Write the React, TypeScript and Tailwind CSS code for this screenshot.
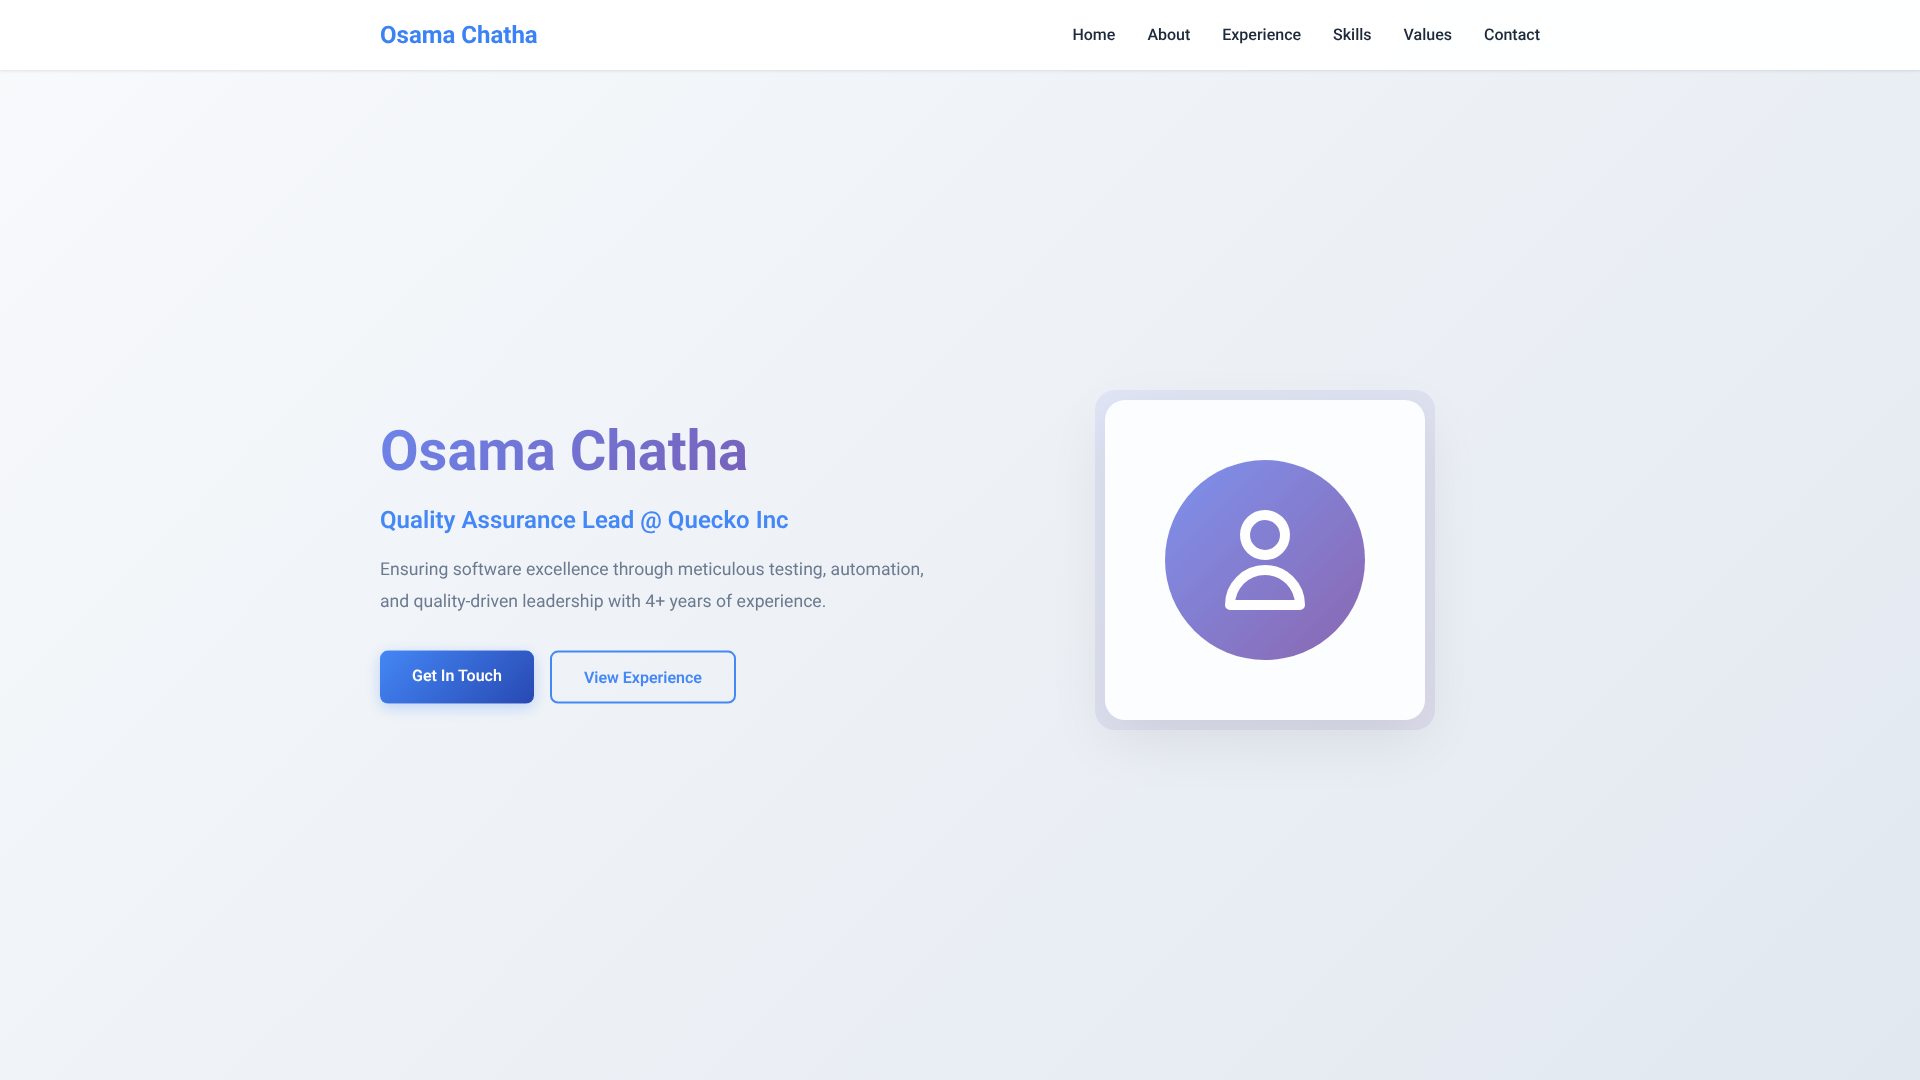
const navLinks = ['Home', 'About', 'Experience', 'Skills', 'Values', 'Contact']

function PersonIcon() {
  return (
    <svg width="100" height="110" viewBox="0 0 100 110" fill="none" stroke="#fff" strokeWidth="10" strokeLinejoin="round">
      <circle cx="50" cy="30" r="20" />
      <path d="M15 100a35 35 0 0 1 70 0z" />
    </svg>
  )
}

export default function App() {
  return (
    <div className="flex h-screen flex-col overflow-hidden bg-[linear-gradient(135deg,#f8fafc_0%,#e2e8f0_100%)] font-['Roboto',sans-serif] [text-rendering:geometricPrecision]">
      {/* Nav */}
      <header className="z-10 h-[70px] shrink-0 bg-white/95 shadow-[0_1px_3px_rgba(0,0,0,0.1)] backdrop-blur-sm">
        <nav className="mx-auto flex h-full max-w-[1200px] items-center justify-between px-5">
          <a className="text-2xl font-bold text-[#3b82f6]">Osama Chatha</a>
          <ul className="flex gap-8">
            {navLinks.map((link) => (
              <li key={link} className="text-base font-medium text-[#1e293b]">
                {link}
              </li>
            ))}
          </ul>
        </nav>
      </header>

      {/* Hero */}
      <main className="flex flex-1 items-center pb-[30px]">
        <div className="mx-auto grid w-full max-w-[1200px] grid-cols-2 items-center gap-[60px] px-5">
          <div className="translate-y-[0.6px] opacity-95 blur-[0.4px]">
            <h1 className="mb-4 bg-[linear-gradient(135deg,#667eea_0%,#764ba2_100%)] bg-clip-text text-[56px] leading-[1.2] font-bold text-transparent">
              Osama Chatha
            </h1>
            <h2 className="mb-4 text-2xl leading-[1.6] font-semibold tracking-[0.035px] text-[#3b82f6]">
              Quality Assurance Lead @ Quecko Inc
            </h2>
            <p className="mb-8 text-[17.6px] leading-[1.8] text-[#64748b]">
              Ensuring software excellence through meticulous testing, automation, and quality-driven leadership with 4+ years of experience.
            </p>
            <div className="flex gap-4">
              <a className="block rounded-lg bg-[linear-gradient(135deg,#3b82f6,#1e40af)] px-8 py-3 text-base leading-[25.6px] font-semibold text-white shadow-[0_4px_15px_rgba(59,130,246,0.3)]">
                Get In Touch
              </a>
              <a className="block rounded-lg border-2 border-[#3b82f6] px-8 py-3 text-base leading-[25.6px] font-semibold text-[#3b82f6]">
                View Experience
              </a>
            </div>
          </div>

          <div className="flex justify-center">
            <div className="rounded-[20px] bg-[linear-gradient(135deg,rgba(102,126,234,0.1),rgba(118,75,162,0.1))] p-2.5">
              <div className="flex h-[320px] w-[320px] items-center justify-center rounded-[20px] bg-[#fcfdfe] shadow-[0_20px_60px_rgba(0,0,0,0.08)]">
                <div className="flex h-[200px] w-[200px] items-center justify-center rounded-full bg-[linear-gradient(135deg,#667eea,#764ba2)] opacity-[0.84]">
                  <PersonIcon />
                </div>
              </div>
            </div>
          </div>
        </div>
      </main>
    </div>
  )
}
